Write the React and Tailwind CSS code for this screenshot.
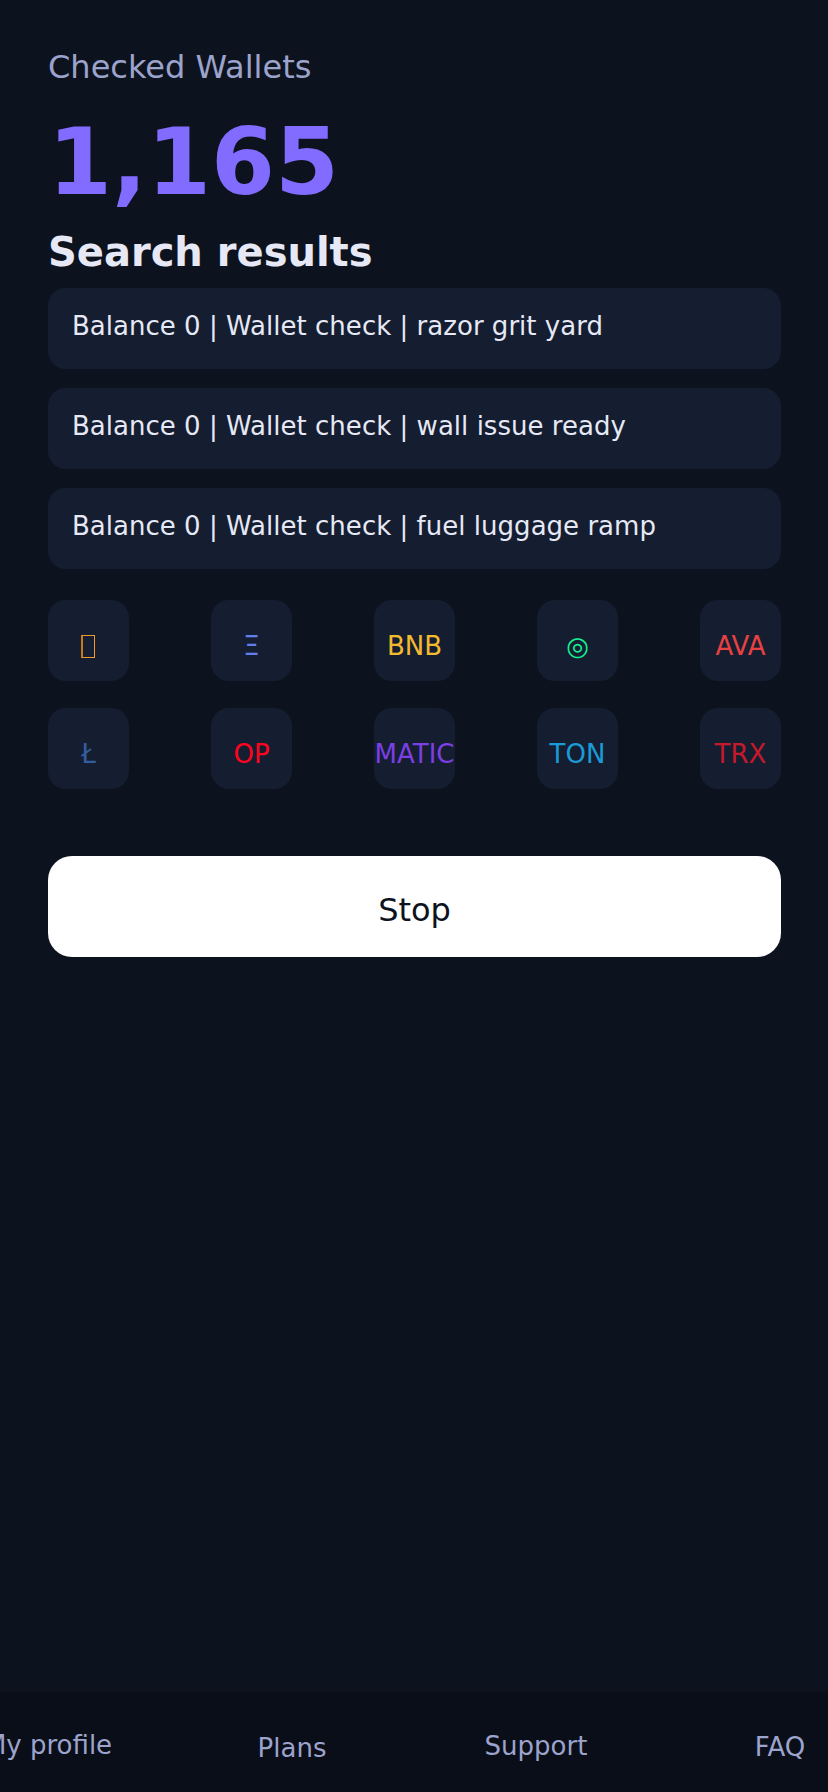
const results = [
  "Balance 0 | Wallet check | razor grit yard",
  "Balance 0 | Wallet check | wall issue ready",
  "Balance 0 | Wallet check | fuel luggage ramp",
];

const coins = [
  ["", "text-[#f7931a]"],
  ["Ξ", "text-[#627eea]"],
  ["BNB", "text-[#f3ba2f]"],
  ["◎", "text-[#14f195]"],
  ["AVA", "text-[#e84142]"],
  ["Ł", "text-[#345d9d]"],
  ["OP", "text-[#ff0420]"],
  ["MATIC", "text-[#7b3fe4]"],
  ["TON", "text-[#1a9bd7]"],
  ["TRX", "text-[#c51a2b]"],
];

export default function App() {
  return (
    <div className="flex h-[1792px] w-[828px] flex-col overflow-hidden bg-[#0d131e] font-['DejaVu_Sans',sans-serif] text-[26px] text-[#e6e9f5]">
      <main className="flex flex-1 flex-col pt-12 pr-[47px] pl-12">
        <p className="text-[32px] leading-[38px] text-[#9ca3cc]">Checked Wallets</p>
        <p className="mt-[20px] text-[92px] leading-[114px] font-bold text-[#826bff]">1,165</p>
        <h1 className="mt-[8px] text-[40px] leading-[48px] font-bold">Search results</h1>
        <ul className="mt-[12px] flex flex-col gap-[19px]">
          {results.map((r) => (
            <li key={r} className="h-[81px] rounded-[18px] bg-[#151d30] pt-[22px] pl-6 leading-[32px] tracking-[0.02px] whitespace-nowrap">{r}</li>
          ))}
        </ul>
        <div className="mt-[31px] grid grid-cols-5 gap-x-[82px] gap-y-[27px]">
          {coins.map(([label, color]) => (
            <div key={color} className={`flex h-[81px] justify-center rounded-[18px] bg-[#151d30] pt-[30px] leading-[32px] ${color}`}>
              {label || <span className="mt-[5px] mr-px h-[23px] w-[14px] border border-l-2 border-[#f19a2c] border-l-[#c57a1d]" />}
            </div>
          ))}
        </div>
        <button className="mt-[67px] h-[101px] rounded-[24px] bg-white pt-[6px] text-[32px] text-[#0d131e]">Stop</button>
      </main>
      <nav className="h-[100px] bg-[#0a0e18] leading-[32px] text-[#9ca3cc]">
        <div className="-mx-[74px] grid grid-cols-4 text-center">
          <span className="pt-[37px]">My profile</span>
          <span className="pt-[40px]">Plans</span>
          <span className="pt-[38px]">Support</span>
          <span className="pt-[39px]">FAQ</span>
        </div>
      </nav>
    </div>
  );
}
